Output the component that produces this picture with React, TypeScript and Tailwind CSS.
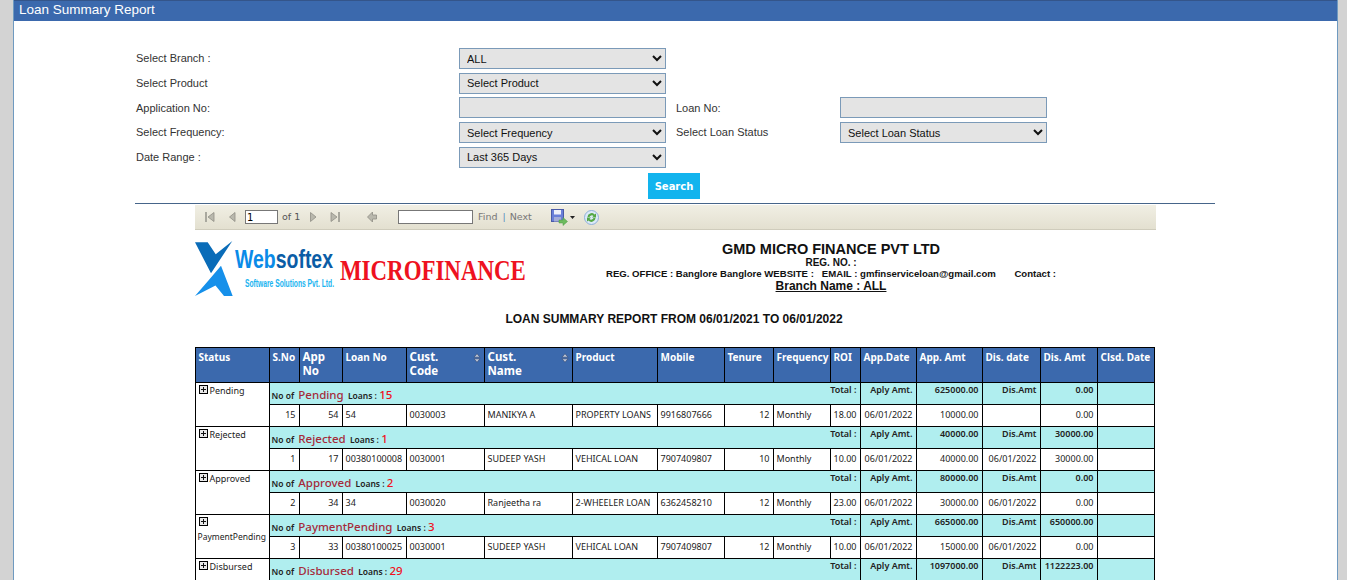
import * as React from "react";

const groups = [
  { status: "Pending", count: 15, aply: "625000.00", dis: "0.00", row: ["15", "54", "54", "0030003", "MANIKYA A", "PROPERTY LOANS", "9916807666", "12", "Monthly", "18.00", "06/01/2022", "10000.00", "", "0.00", ""] },
  { status: "Rejected", count: 1, aply: "40000.00", dis: "30000.00", row: ["1", "17", "00380100008", "0030001", "SUDEEP YASH", "VEHICAL LOAN", "7907409807", "10", "Monthly", "10.00", "06/01/2022", "40000.00", "06/01/2022", "30000.00", ""] },
  { status: "Approved", count: 2, aply: "80000.00", dis: "0.00", row: ["2", "34", "34", "0030020", "Ranjeetha ra", "2-WHEELER LOAN", "6362458210", "12", "Monthly", "23.00", "06/01/2022", "30000.00", "06/01/2022", "0.00", ""] },
  { status: "PaymentPending", count: 3, aply: "665000.00", dis: "650000.00", row: ["3", "33", "00380100025", "0030001", "SUDEEP YASH", "VEHICAL LOAN", "7907409807", "12", "Monthly", "10.00", "06/01/2022", "15000.00", "06/01/2022", "0.00", ""] },
  { status: "Disbursed", count: 29, aply: "1097000.00", dis: "1122223.00", row: null },
];

const rightCols = [0, 1, 7, 9, 10, 11, 12, 13];

function Field({ label }: { label: string }) {
  return <label className="flex h-[21px] items-center text-[11px] text-[#333]">{label}</label>;
}

function Select({ value }: { value: string }) {
  return (
    <select
      defaultValue={value}
      className="h-[21px] w-[207px] border border-[#7b9ab8] bg-[#e4e4e4] pl-[3px] text-[11px] text-[#111] [font-family:'Liberation_Sans',sans-serif]"
    >
      <option>{value}</option>
    </select>
  );
}

function TextBox() {
  return <input className="h-[21px] w-[207px] border border-[#7b9ab8] bg-[#e4e4e4]" />;
}

function NavIcon({ d, bar }: { d: string; bar?: number }) {
  return (
    <svg width="10" height="12" viewBox="0 0 10 12">
      <path d={d} fill="#b9b8ad" stroke="#8f8e85" strokeWidth="0.8" />
      {bar !== undefined && <rect x={bar} y="1" width="2" height="10" fill="#a9a89e" />}
    </svg>
  );
}

function SaveIcon() {
  return (
    <svg width="17" height="17" viewBox="0 0 17 17">
      <rect x="0.500" y="0.500" width="12" height="12" fill="#6a7fd8" stroke="#4a5aa8" />
      <rect x="3" y="1" width="7" height="4.500" fill="#eef0fa" />
      <rect x="3" y="8" width="7" height="4.500" fill="#a4acd8" />
      <path d="M8 11h4V8.500L16.500 12.500 12 16.500V14H8z" fill="#6dbb5e" stroke="#4a9a44" strokeWidth="0.5" />
    </svg>
  );
}

function RefreshIcon() {
  return (
    <svg width="15" height="15" viewBox="0 0 15 15">
      <circle cx="7.500" cy="7.500" r="7" fill="#dbe9f8" stroke="#8fb0d8" />
      <path d="M3.500 7A4 4 0 0 1 10.500 4.500L12 3.500V7.500H8L9.500 6A2.500 2.500 0 0 0 5.500 7z" fill="#55a845" />
      <path d="M11.500 8A4 4 0 0 1 4.500 10.500L3 11.500V7.500H7L5.500 9A2.500 2.500 0 0 0 9.500 8z" fill="#55a845" />
    </svg>
  );
}

function Toolbar() {
  return (
    <div className="flex h-[25px] w-[961px] items-center border-b border-[#cfccbc] bg-gradient-to-b from-[#f1efe4] to-[#e3e0d0] text-[9.500px] text-[#777] [font-family:'DejaVu_Sans',sans-serif]">
      <div className="ml-[10px] flex"><NavIcon d="M9 1.500V10.500L3 6z" bar={0} /></div>
      <div className="ml-[13px] flex"><NavIcon d="M7 1.500V10.500L1.500 6z" /></div>
      <input defaultValue="1" className="ml-[7px] h-[14px] w-[33px] border border-[#777] bg-white pl-[1px] text-[10px] text-black" />
      <span className="ml-[4px] w-[18px] whitespace-nowrap text-[#555]">of 1</span>
      <div className="ml-[9px] flex"><NavIcon d="M1.500 1.500V10.500L7 6z" /></div>
      <div className="ml-[11px] flex"><NavIcon d="M1 1.500V10.500L7 6z" bar={8} /></div>
      <div className="ml-[27px] flex">
        <svg width="10" height="12" viewBox="0 0 10 12">
          <path d="M5.500 1L0.500 6 5.500 11V8H9.500V4H5.500z" fill="#b9b8ad" stroke="#8f8e85" strokeWidth="0.8" />
        </svg>
      </div>
      <input className="ml-[21px] h-[14px] w-[75px] border border-[#777] bg-white" />
      <span className="ml-[5px]">Find</span>
      <span className="ml-[5px] text-[#5b8fc0]">|</span>
      <span className="ml-[4px]">Next</span>
      <div className="ml-[19px] flex"><SaveIcon /></div>
      <svg className="ml-[2px]" width="5" height="3" viewBox="0 0 5 3"><path d="M0 0H5L2.500 3z" fill="#222" /></svg>
      <div className="ml-[9px] flex"><RefreshIcon /></div>
    </div>
  );
}

function Logo() {
  return (
    <svg className="shrink-0" width="140" height="58" viewBox="0 0 140 58">
      <path d="M0 2.300H12.700L20.700 14.300 37.300 1 16 33.300z" fill="#0a6cb8" />
      <path d="M26 25.700L37.700 56H29L20.500 45.500 0 56 13 41z" fill="#1690ea" />
      <text x="40" y="28" textLength="98" lengthAdjust="spacingAndGlyphs" fontFamily="'Liberation Sans', sans-serif" fontWeight="700" fontSize="26">
        <tspan fill="#0a8be8">Web</tspan>
        <tspan fill="#0b5da6">softex</tspan>
      </text>
      <text x="50" y="47" textLength="89" lengthAdjust="spacingAndGlyphs" fontFamily="'Liberation Sans', sans-serif" fontWeight="700" fontSize="11" fill="#1ab4f0">
        Software Solutions Pvt. Ltd.
      </text>
    </svg>
  );
}

function ReportHeader() {
  return (
    <div className="flex w-[961px] pt-[10px]">
      <div className="flex w-[331px] shrink-0 items-start">
        <Logo />
        <span className="ml-[5px] mt-[12px] inline-block origin-left scale-x-[0.79] whitespace-nowrap text-[29px] leading-[36px] font-bold text-[#ee1120] [font-family:'Liberation_Serif',serif]">MICROFINANCE</span>
      </div>
      <div className="w-[610px] text-center text-[#111]">
        <div className="text-[14.500px] leading-[18px] font-bold">GMD MICRO FINANCE PVT LTD</div>
        <div className="text-[10px] leading-[9px] font-bold">REG. NO. :</div>
        <div className="whitespace-pre text-[9.600px] leading-[14px] font-bold">{"REG. OFFICE : Banglore Banglore WEBSITE :   EMAIL : gmfinserviceloan@gmail.com       Contact :"}</div>
        <div className="text-[12px] leading-[10px] font-bold underline">Branch Name : ALL</div>
      </div>
    </div>
  );
}

function SortIcon() {
  return (
    <svg className="mt-[3px] shrink-0" width="8" height="10" viewBox="0 0 8 10">
      <path d="M4 0.800L7 4.200H1zM4 9.200L7 5.800H1z" fill="#b8c2d4" stroke="#2d3f66" strokeWidth="0.500" />
    </svg>
  );
}

function PlusBox() {
  return (
    <span className="inline-flex h-[9px] w-[9px] items-center justify-center border border-black bg-[#e8e8e8] align-[1px] text-[0px]">
      <svg width="7" height="7" viewBox="0 0 7 7"><path d="M1 3.500H6M3.500 1V6" stroke="#111" strokeWidth="1" /></svg>
    </span>
  );
}

function HeadCell({ children, big, sort }: { children: React.ReactNode; big?: boolean; sort?: boolean }) {
  return (
    <th className="border border-black bg-[#3b69ad] px-[3px] pt-[2px] align-top text-left font-bold text-white">
      <div className={"flex justify-between whitespace-nowrap " + (big ? "text-[11.500px] leading-[14px]" : "text-[10px] leading-[14px]")}>
        <span>{children}</span>
        {sort && <SortIcon />}
      </div>
    </th>
  );
}

function ReportTable() {
  const totalCell = "border border-black bg-[#b0eeef] px-[3px] pt-0 align-top text-right font-semibold";
  return (
    <table className="-ml-[0.5px] mt-[20px] w-[960px] table-fixed border-collapse text-[9px] text-[#222] [font-family:'Noto_Sans',sans-serif]">
      <colgroup>
        <col className="w-[74px]" />
        <col className="w-[30px]" />
        <col className="w-[43px]" />
        <col className="w-[64px]" />
        <col className="w-[78px]" />
        <col className="w-[88px]" />
        <col className="w-[85px]" />
        <col className="w-[67px]" />
        <col className="w-[49px]" />
        <col className="w-[57px]" />
        <col className="w-[30px]" />
        <col className="w-[56px]" />
        <col className="w-[66px]" />
        <col className="w-[58px]" />
        <col className="w-[57px]" />
        <col className="w-[57px]" />
      </colgroup>
      <thead>
        <tr className="h-[35px]">
          <HeadCell>Status</HeadCell>
          <HeadCell>S.No</HeadCell>
          <HeadCell big>App<br />No</HeadCell>
          <HeadCell>Loan No</HeadCell>
          <HeadCell big sort>Cust.<br />Code</HeadCell>
          <HeadCell big sort>Cust.<br />Name</HeadCell>
          <HeadCell>Product</HeadCell>
          <HeadCell>Mobile</HeadCell>
          <HeadCell>Tenure</HeadCell>
          <HeadCell>Frequency</HeadCell>
          <HeadCell>ROI</HeadCell>
          <HeadCell>App.Date</HeadCell>
          <HeadCell>App. Amt</HeadCell>
          <HeadCell>Dis. date</HeadCell>
          <HeadCell>Dis. Amt</HeadCell>
          <HeadCell>Clsd. Date</HeadCell>
        </tr>
      </thead>
      <tbody>
        {groups.map((g) => (
          <React.Fragment key={g.status}>
            <tr className="h-[22px]">
              <td rowSpan={2} className="border border-black bg-white pl-[3px] pt-[1px] align-top">
                <PlusBox />
                {g.status === "PaymentPending" ? (
                  <div className="-ml-[1px] text-[8.500px] leading-[14px]">{g.status}</div>
                ) : (
                  <span className="ml-[2px]">{g.status}</span>
                )}
              </td>
              <td colSpan={10} className="border border-black bg-[#b0eeef] pl-[2px] pr-[3px]">
                <div className="flex items-start justify-between">
                  <span className="mt-[1px] whitespace-nowrap text-[8.500px] font-semibold">
                    No of <span className="mx-[2px] text-[11.500px] font-medium text-[#a52a3a]">{g.status}</span> Loans : <span className="text-[11.500px] font-medium text-[#f01020]">{g.count}</span>
                  </span>
                  <span className="-mt-[2px] font-semibold">Total :</span>
                </div>
              </td>
              <td className={totalCell}>Aply Amt.</td>
              <td className={totalCell}>{g.aply}</td>
              <td className={totalCell}>Dis.Amt</td>
              <td className={totalCell}>{g.dis}</td>
              <td className="border border-black bg-[#b0eeef]" />
            </tr>
            <tr className="h-[22px]">
              {g.row &&
                g.row.map((v, i) => (
                  <td key={i} className={"overflow-hidden whitespace-nowrap border border-black bg-white px-[3px] pb-[2px] " + (rightCols.includes(i) ? "text-right" : "text-left")}>
                    {v}
                  </td>
                ))}
            </tr>
          </React.Fragment>
        ))}
      </tbody>
    </table>
  );
}

export default function App() {
  return (
    <div className="h-[580px] overflow-hidden bg-[#d3d3d3] pl-[13px] [font-family:'Liberation_Sans',Arial,sans-serif]">
      <div className="h-full w-[1325px] border-x border-[#6f9ac0] bg-white">
        <div className="h-[21px] border-t border-[#34558a] bg-[#3b69ad] pl-[5px] text-[13.500px] leading-[18px] text-white">Loan Summary Report</div>

        <div className="ml-[122px] mt-[27px] grid grid-cols-[323px_217px_164px_207px] gap-y-[3.700px]">
          <Field label="Select Branch :" />
          <Select value="ALL" />
          <div className="col-span-2" />
          <Field label="Select Product" />
          <Select value="Select Product" />
          <div className="col-span-2" />
          <Field label="Application No:" />
          <TextBox />
          <Field label="Loan No:" />
          <TextBox />
          <Field label="Select Frequency:" />
          <Select value="Select Frequency" />
          <Field label="Select Loan Status" />
          <Select value="Select Loan Status" />
          <Field label="Date Range :" />
          <Select value="Last 365 Days" />
        </div>

        <div className="ml-[634px] mt-[5px]">
          <button className="h-[26px] w-[52px] bg-[#12b4ee] text-[10px] font-bold text-white [font-family:'DejaVu_Sans',sans-serif]">Search</button>
        </div>
        <div className="ml-[121px] mt-[4px] h-[1px] w-[1080px] bg-[#46658a]" />

        <div className="ml-[181px] mt-[1px]">
          <Toolbar />
          <ReportHeader />
          <div className="mt-[13px] w-[958px] text-center text-[12px] leading-[16px] font-bold text-[#111]">LOAN SUMMARY REPORT FROM 06/01/2021 TO 06/01/2022</div>
          <ReportTable />
        </div>
      </div>
    </div>
  );
}
